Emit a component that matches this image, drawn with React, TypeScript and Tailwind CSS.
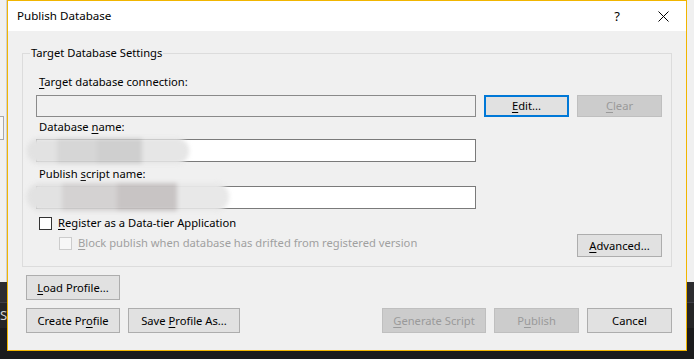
import React from "react";

function U({ children }: { children: React.ReactNode }) {
  return <span className="underline decoration-1 underline-offset-[2px]">{children}</span>;
}

function Btn({
  children,
  cls,
  kind = "normal",
}: {
  children: React.ReactNode;
  cls: string;
  kind?: "normal" | "focus" | "disabled";
}) {
  const k =
    kind === "focus"
      ? "border-2 border-[#0078d7] bg-[#e1e1e1] text-black"
      : kind === "disabled"
      ? "border border-[#bfbfbf] bg-[#cccccc] text-[#9a9a9a]"
      : "border border-[#adadad] bg-[#e1e1e1] text-black";
  return <div className={`flex items-center justify-center shrink-0 ${k} ${cls}`}>{children}</div>;
}

export default function App() {
  return (
    <div className="relative w-[694px] h-[359px] overflow-hidden font-['Noto_Sans',sans-serif] text-[11.2px] leading-[16px] text-black">
      {/* desktop background */}
      <div className="flex flex-col h-full">
        <div className="h-[282px] bg-[#f0f0f0] flex">
          <div className="w-[7px] border-r border-[#cfcfcf] flex flex-col pt-[116px]">
            <div className="h-[24px] w-[4px] border border-l-0 border-[#a8a8a8] bg-[#f7f7f7]" />
          </div>
        </div>
        <div className="flex-1 bg-[#2d2d30] flex flex-col">
          <div className="h-[20px]" />
          <div className="h-[26px] bg-[#252526] border-t border-[#3f3f46] text-[#d4d4d4] text-[13px] leading-[24px]">Se</div>
          <div className="flex-1 bg-[#1b1b1c]" />
        </div>
      </div>

      {/* dialog window */}
      <div className="absolute left-[7px] top-0 w-[680px] h-[351px] border border-[#f1b500] bg-[#f0f0f0] flex flex-col">
        {/* title bar */}
        <div className="h-[30px] bg-white flex items-center shrink-0">
          <div className="pl-[9px] text-[11.6px]">Publish Database</div>
          <div className="ml-auto w-[46px] h-full flex items-center justify-center text-[13px]">?</div>
          <div className="w-[46px] h-full flex items-center justify-center">
            <svg width="11" height="11" viewBox="0 0 11 11">
              <path d="M0.5 0.5 L10.5 10.5 M10.5 0.5 L0.5 10.5" stroke="#000" strokeWidth="1" fill="none" />
            </svg>
          </div>
        </div>

        {/* body */}
        <div className="flex-1 flex flex-col px-[14px] pt-[22px]">
          {/* group box */}
          <div className="relative h-[214px] border border-[#dcdcdc] flex flex-col pl-[13px] pr-[9px] pt-[20px] pb-[9px]">
            <div className="absolute left-[7px] top-[-9px] bg-[#f0f0f0] px-[1px]">Target Database Settings</div>

            <div className="ml-[3px] h-[16px]">
              <U>T</U>arget database connection:
            </div>
            <div className="flex gap-[8px] mt-[5px]">
              <div className="w-[440px] h-[22px] border border-[#8a8a8a] bg-[#f0f0f0]" />
              <Btn kind="focus" cls="w-[85px] h-[22px]">
                <span>
                  <U>E</U>dit...
                </span>
              </Btn>
              <Btn kind="disabled" cls="w-[85px] h-[22px]">
                <span>
                  <U>C</U>lear
                </span>
              </Btn>
            </div>

            <div className="ml-[3px] h-[16px] mt-[2px]">
              Database <U>n</U>ame:
            </div>
            <div className="w-[440px] h-[23px] border border-[#7a7a7a] bg-white mt-[4px]" />

            <div className="ml-[3px] h-[16px] mt-[4px]">
              Publish <U>s</U>cript name:
            </div>
            <div className="w-[440px] h-[23px] border border-[#7a7a7a] bg-white mt-[4px]" />

            <div className="flex items-center h-[16px] mt-[6px] ml-[3px] gap-[6px]">
              <div className="w-[13px] h-[13px] border border-[#333333] bg-white" />
              <div>
                <U>R</U>egister as a Data-tier Application
              </div>
            </div>

            <div className="flex justify-between items-start mt-[3px]">
              <div className="flex items-center h-[16px] mt-[1px] ml-[23px] gap-[6px] text-[#a0a0a0]">
                <div className="w-[13px] h-[13px] border border-[#cccccc] bg-[#f7f7f7]" />
                <div>
                  <U>B</U>lock publish when database has drifted from registered version
                </div>
              </div>
              <Btn cls="w-[85px] h-[23px]">
                <span>
                  <U>A</U>dvanced...
                </span>
              </Btn>
            </div>

            {/* redaction smudges */}
            <div className="absolute left-[4px] top-[84px] w-[162px] h-[26px] rounded-full bg-[#dadada] blur-[2px] flex overflow-hidden">
              <div className="w-[30px] h-full bg-[#e2e2e2]" />
              <div className="w-[40px] h-full bg-[#d6d6d6]" />
              <div className="w-[45px] h-full bg-[#cfcfcf]" />
              <div className="w-[47px] h-full bg-[#e6e6e6]" />
            </div>
            <div className="absolute left-[4px] top-[129px] w-[202px] h-[28px] rounded-full bg-[#d6d4d4] blur-[2px] flex overflow-hidden">
              <div className="w-[35px] h-full bg-[#e2e2e2]" />
              <div className="w-[55px] h-full bg-[#d4d2d2]" />
              <div className="w-[60px] h-full bg-[#c8c4c4]" />
              <div className="w-[52px] h-full bg-[#e8e8e8]" />
            </div>
          </div>

          {/* bottom buttons */}
          <div className="mt-[8px] pl-[4px] flex">
            <Btn cls="w-[94px] h-[25px]">
              <span>
                <U>L</U>oad Profile...
              </span>
            </Btn>
          </div>
          <div className="mt-[8px] pl-[4px] flex justify-between">
            <div className="flex gap-[8px]">
              <Btn cls="w-[94px] h-[25px]">
                <span>
                  Create Pr<U>o</U>file
                </span>
              </Btn>
              <Btn cls="w-[112px] h-[25px]">
                <span>
                  Save <U>P</U>rofile As...
                </span>
              </Btn>
            </div>
            <div className="flex gap-[8px]">
              <Btn kind="disabled" cls="w-[104px] h-[25px]">
                <span>
                  <U>G</U>enerate Script
                </span>
              </Btn>
              <Btn kind="disabled" cls="w-[85px] h-[25px]">
                <span>
                  P<U>u</U>blish
                </span>
              </Btn>
              <Btn cls="w-[85px] h-[25px]">
                <span>Cancel</span>
              </Btn>
            </div>
          </div>
        </div>
      </div>
    </div>
  );
}
